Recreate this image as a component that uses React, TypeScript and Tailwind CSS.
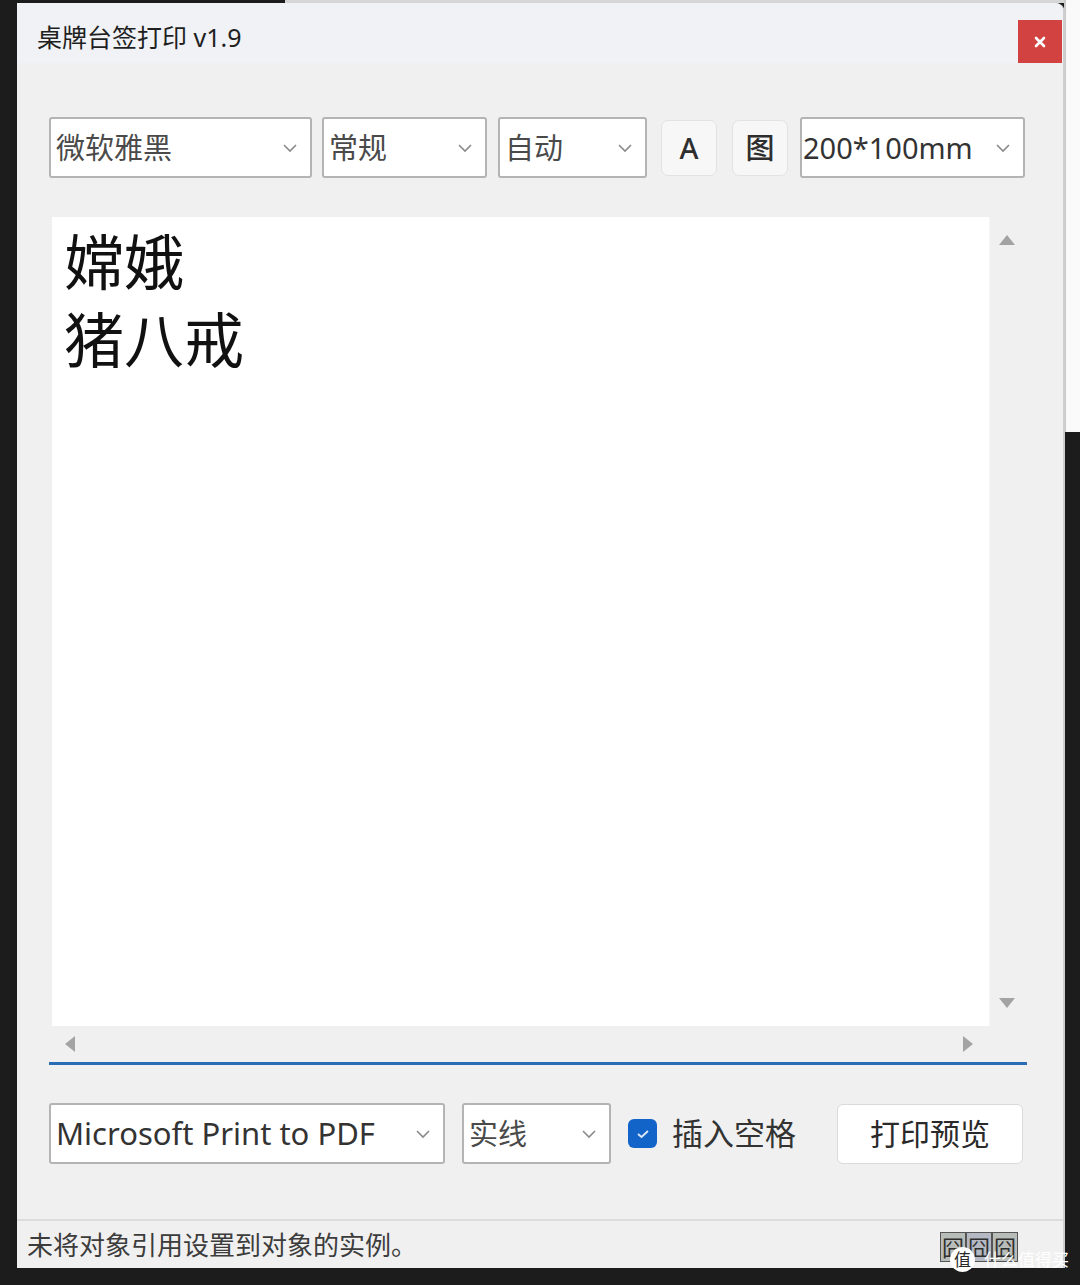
import React from "react";

const CJK = { fontFamily: '"Noto Sans", "Noto Sans CJK SC", sans-serif' };

function Chevron() {
  return (
    <svg width="16" height="10" viewBox="0 0 16 10" className="shrink-0">
      <path d="M2 2 L8 8 L14 2" fill="none" stroke="#8a8a8a" strokeWidth="1.6" />
    </svg>
  );
}

function Combo({
  label,
  width,
  textClass = "text-[29px] text-[#4a4a4a] pl-[5px]",
}: {
  label: string;
  width: string;
  textClass?: string;
}) {
  return (
    <div
      className={`${width} h-[61px] shrink-0 flex items-center justify-between bg-white border-2 border-[#b4b4b4] rounded-[3px] pr-[12px]`}
    >
      <span className={`${textClass} leading-none whitespace-nowrap`}>{label}</span>
      <Chevron />
    </div>
  );
}

function ToolButton({ children }: { children: React.ReactNode }) {
  return (
    <div className="w-[56px] h-[56px] shrink-0 flex items-center justify-center bg-[#f7f7f7] border border-[#e2e2e2] rounded-[7px] text-[29px] font-medium text-[#2e2e2e] leading-none">
      {children}
    </div>
  );
}

function Arrow({ dir }: { dir: "up" | "down" | "left" | "right" }) {
  const d = {
    up: "M1 12 L9 2 L17 12 Z",
    down: "M1 2 L9 12 L17 2 Z",
    left: "M12 1 L2 9 L12 17 Z",
    right: "M2 1 L12 9 L2 17 Z",
  }[dir];
  const vertical = dir === "up" || dir === "down";
  return (
    <svg width={vertical ? 18 : 14} height={vertical ? 14 : 18} viewBox={vertical ? "0 0 18 14" : "0 0 14 18"}>
      <path d={d} fill="#a3a3a3" />
    </svg>
  );
}

export default function App() {
  return (
    <div className="relative w-[1080px] h-[1285px] bg-[#1c1c1c] overflow-hidden" style={CJK}>
      {/* windows behind */}
      <div className="absolute left-[285px] top-0 w-[795px] h-[3px] bg-[#d6d6d6]" />
      <div className="absolute left-[1064px] top-0 w-[16px] h-[432px] bg-[#fafafa] border-l-2 border-[#c9c9c9]" />

      {/* main window */}
      <div className="relative ml-[17px] pt-[3px] w-[1048px]">
        <div className="h-[1265px] flex flex-col bg-[#f0f0f0] rounded-tr-[9px] border-r-2 border-[#cfcfcf] overflow-hidden">
          {/* title bar */}
          <div className="flex items-start justify-between pl-[20px] pr-[1px] pt-[17px] bg-[#f0f2f5]">
            <div className="text-[25px] leading-none text-[#1f1f1f] mt-[5px]">桌牌台签打印 v1.9</div>
            <div className="w-[44px] h-[43px] flex items-center justify-center bg-[#d24240]">
              <svg width="12" height="12" viewBox="0 0 12 12">
                <path d="M2 2 L10 10 M10 2 L2 10" stroke="#fff" strokeWidth="2.6" strokeLinecap="round" />
              </svg>
            </div>
          </div>

          {/* font / size toolbar */}
          <div className="flex items-center pl-[32px] mt-[54px]">
            <Combo label="微软雅黑" width="w-[263px]" />
            <div className="w-[10px]" />
            <Combo label="常规" width="w-[165px]" />
            <div className="w-[11px]" />
            <Combo label="自动" width="w-[149px]" />
            <div className="w-[14px]" />
            <ToolButton>A</ToolButton>
            <div className="w-[15px]" />
            <ToolButton>图</ToolButton>
            <div className="w-[12px]" />
            <Combo label="200*100mm" width="w-[225px]" textClass="text-[29px] text-[#333] pl-[1px]" />
          </div>

          {/* text editor */}
          <div className="ml-[32px] mt-[37px] w-[978px] h-[850px] flex flex-col bg-[#f0f0f0] border-b-[3px] border-[#2a6db5]">
            <div className="flex flex-1 pt-[2px] pl-[3px]">
              <div className="flex-1 bg-white pl-[12px] pt-[6px]">
                <div className="text-[60px] leading-[78px] text-[#111]">嫦娥</div>
                <div className="text-[60px] leading-[78px] text-[#111]">猪八戒</div>
              </div>
              <div className="w-[38px] flex flex-col items-center justify-between py-[16px] pr-[4px] bg-[#f0f0f0] border-l border-[#f6f6f6]">
                <Arrow dir="up" />
                <Arrow dir="down" />
              </div>
            </div>
            <div className="h-[36px] flex items-center justify-between pl-[14px] pr-[52px]">
              <Arrow dir="left" />
              <Arrow dir="right" />
            </div>
          </div>

          {/* printer row */}
          <div className="flex items-center pl-[32px] mt-[38px]">
            <Combo label="Microsoft Print to PDF" width="w-[396px]" textClass="text-[31px] text-[#333] pl-[5px]" />
            <div className="w-[17px]" />
            <Combo label="实线" width="w-[149px]" />
            <div className="w-[17px]" />
            <div className="w-[29px] h-[29px] shrink-0 flex items-center justify-center bg-[#1264c8] rounded-[6px]">
              <svg width="16" height="12" viewBox="0 0 16 12">
                <path d="M3 6 L6.5 9 L13 3" fill="none" stroke="#dfeaf8" strokeWidth="1.8" />
              </svg>
            </div>
            <div className="w-[15px]" />
            <span className="text-[31px] leading-none text-[#333]">插入空格</span>
            <div className="w-[41px]" />
            <div className="w-[186px] h-[60px] flex items-center justify-center bg-white border border-[#dadada] rounded-[6px] text-[30px] leading-none text-[#2a2a2a]">
              打印预览
            </div>
          </div>

          <div className="flex-1" />

          {/* status bar */}
          <div className="h-[49px] flex items-center justify-between border-t-2 border-[#dcdcdc] pl-[10px] pr-[45px]">
            <span className="text-[26px] leading-none text-[#3c3c3c]">未将对象引用设置到对象的实例。</span>
            <div className="flex mt-[4px]">
              <span className="text-[22px] leading-[28px] px-[1px] text-[#2f2f2f] bg-[#b9bdb9] border border-[#555]">囧</span>
              <span className="text-[22px] leading-[28px] px-[1px] text-[#2f2f2f] bg-[#b4b9c4] border border-[#555]">囧</span>
              <span className="text-[22px] leading-[28px] px-[1px] text-[#2f2f2f] bg-[#b9bdb9] border border-[#555]">囧</span>
            </div>
          </div>
        </div>
      </div>

      {/* watermark */}
      <div className="absolute left-[950px] top-[1247px] flex items-center gap-[9px] whitespace-nowrap">
        <div className="w-[25px] h-[25px] rounded-full bg-white flex items-center justify-center text-[17px] leading-none text-[#2a2a2a]">
          值
        </div>
        <span className="text-[17px] leading-none text-white">什么值得买</span>
      </div>
    </div>
  );
}
